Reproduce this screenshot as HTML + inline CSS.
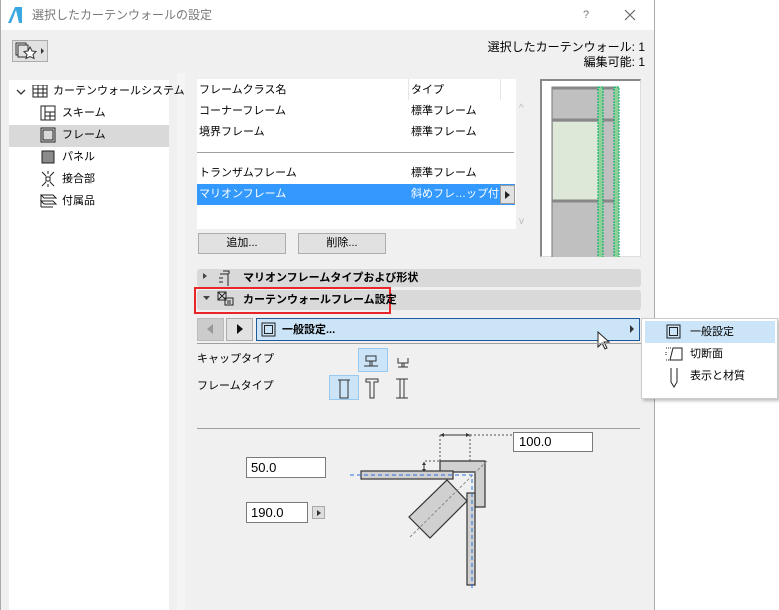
<!DOCTYPE html>
<html><head><meta charset="utf-8"><style>
*{box-sizing:border-box;margin:0;padding:0}
body{width:779px;height:610px;position:relative;background:#fff;font-family:"Liberation Sans","Noto Sans CJK JP",sans-serif;font-size:11px;color:#000;overflow:hidden}
.a{position:absolute}
.t{position:absolute;white-space:nowrap;line-height:14px}
</style></head><body>
<div class="a" style="left:0;top:0;width:655px;height:610px;background:#f0f0f0;border-left:1px solid #aaa;border-right:1px solid #aaa"></div>
<div class="a" style="left:1px;top:0;width:653px;height:30px;background:#fff"></div>
<svg class="a" style="left:7px;top:6px" width="16" height="18"><path d="M1 17 L8 1 L15 1 L15 17 Z" fill="#3aa8e0"/><path d="M4 17 L9 4 L12 17" fill="#fff"/></svg>
<div class="t" style="left:32px;top:8px;color:#777;font-size:12px">選択したカーテンウォールの設定</div>
<div class="t" style="left:583px;top:8px;color:#777">?</div>
<svg class="a" style="left:624px;top:9px" width="12" height="12"><path d="M1 1L11 11M11 1L1 11" stroke="#666" stroke-width="1.2"/></svg>
<div class="a" style="left:12px;top:40px;width:36px;height:22px;border:1px solid #adadad;background:#e1e1e1"></div>
<svg class="a" style="left:14px;top:42px" width="34" height="18"><rect x="2" y="1" width="10" height="12" fill="none" stroke="#333"/><rect x="4" y="3" width="10" height="12" fill="#e1e1e1" stroke="#333"/><path d="M16 5l2 4 4 .5-3 3 1 4-4-2-4 2 1-4-3-3 4-.5z" fill="#fff" stroke="#333"/><path d="M27 6l3 3-3 3z" fill="#333"/></svg>
<div class="t" style="right:134px;top:40px;text-align:right;font-size:12px">選択したカーテンウォール: 1</div>
<div class="t" style="right:134px;top:55px;text-align:right;font-size:12px">編集可能: 1</div>
<div class="a" style="left:9px;top:80px;width:160px;height:530px;background:#fff"></div>
<div class="a" style="left:169px;top:73px;width:16px;height:537px;background:#f0f0f0"></div>
<div class="a" style="left:177px;top:73px;width:8px;height:537px;background:#f5f5f5"></div>
<div class="a" style="left:9px;top:125px;width:160px;height:22px;background:#d9d9d9"></div>
<svg class="a" style="left:14px;top:85px" width="160" height="130">
<path d="M3 5l4 4 4-4" fill="none" stroke="#333" stroke-width="1.3"/>
<g fill="none" stroke="#222"><rect x="19" y="0" width="14" height="12"/><path d="M24 0v12M29 0v12M19 4h14M19 8h14"/>
<rect x="27" y="21" width="14" height="14"/><path d="M31 21v14M31 27h10M36 27v8M31 31h10"/>
<rect x="27" y="43" width="14" height="14"/><rect x="29" y="45" width="10" height="10"/>
<path d="M28 101l4-4M40 101l-4-4M28 87l4 4M40 87l-4 4M34 86v3M34 99v3"/><rect x="32" y="92" width="4" height="4"/>
<path d="M27 110h12l3 3H30zM27 116h12l3 3H30zM27 122h12M27 110v12"/></g>
<rect x="28" y="66" width="12" height="12" fill="#8a8a8a" stroke="#222"/></svg>
<div class="t" style="left:53px;top:84px">カーテンウォールシステム</div>
<div class="t" style="left:62px;top:106px">スキーム</div>
<div class="t" style="left:62px;top:128px">フレーム</div>
<div class="t" style="left:62px;top:150px">パネル</div>
<div class="t" style="left:62px;top:172px">接合部</div>
<div class="t" style="left:62px;top:194px">付属品</div>
<div class="a" style="left:197px;top:79px;width:319px;height:150px;background:#fff"></div>
<div class="a" style="left:408px;top:79px;width:1px;height:21px;background:#e5e5e5"></div>
<div class="a" style="left:500px;top:79px;width:1px;height:21px;background:#e5e5e5"></div>
<div class="t" style="left:199px;top:83px">フレームクラス名</div><div class="t" style="left:411px;top:83px">タイプ</div>
<div class="t" style="left:199px;top:104px">コーナーフレーム</div><div class="t" style="left:411px;top:104px">標準フレーム</div>
<div class="t" style="left:199px;top:125px">境界フレーム</div><div class="t" style="left:411px;top:125px">標準フレーム</div>
<div class="a" style="left:197px;top:152px;width:317px;height:1px;background:#a0a0a0"></div>
<div class="t" style="left:199px;top:166px">トランザムフレーム</div><div class="t" style="left:411px;top:166px">標準フレーム</div>
<div class="a" style="left:197px;top:184px;width:318px;height:21px;background:#3399ff"></div>
<div class="t" style="left:199px;top:187px;color:#fff">マリオンフレーム</div><div class="t" style="left:411px;top:187px;color:#fff">斜めフレ…ップ付き</div>
<div class="a" style="left:500px;top:185px;width:15px;height:19px;background:#e1e1e1;border:1px solid #999"></div>
<svg class="a" style="left:504px;top:190px" width="8" height="10"><path d="M1 1l5 4-5 4z" fill="#222"/></svg>
<div class="t" style="left:519px;top:102px;color:#bbb;font-size:10px">^</div>
<div class="t" style="left:519px;top:215px;color:#bbb;font-size:10px">v</div>
<div class="a" style="left:540px;top:79px;width:101px;height:178px;background:#fff;border:1px solid #ddd;border-top:2px solid #888;border-left:2px solid #888"></div>
<svg class="a" style="left:540px;top:79px" width="101" height="178">
<rect x="12" y="8" width="66" height="243" fill="#c0c0c0" stroke="#777"/>
<rect x="13" y="43" width="45" height="79" fill="#dde8d8"/>
<path d="M12 41h66M12 122h66M12 9h66M12 203h66" stroke="#888" stroke-width="3"/>
<rect x="58" y="8" width="5" height="243" fill="#8fcf9a" stroke="#0a6" stroke-dasharray="2 1"/>
<rect x="74" y="8" width="5" height="243" fill="#8fcf9a" stroke="#0a6" stroke-dasharray="2 1"/>
</svg>
<div class="a" style="left:198px;top:233px;width:88px;height:21px;background:#e1e1e1;border:1px solid #adadad;text-align:center;line-height:19px">追加...</div>
<div class="a" style="left:298px;top:233px;width:88px;height:21px;background:#e1e1e1;border:1px solid #adadad;text-align:center;line-height:19px">削除...</div>
<div class="a" style="left:197px;top:269px;width:444px;height:18px;background:#d9d9d9;border-radius:3px"></div>
<div class="a" style="left:197px;top:290px;width:444px;height:20px;background:#d9d9d9;border-radius:3px"></div>
<div class="a" style="left:194px;top:287px;width:197px;height:27px;border:2px solid #e8262a"></div>
<svg class="a" style="left:200px;top:270px" width="40" height="40"><path d="M3 3l4 3-4 3z" fill="#444"/><path d="M3 26h7l-3.5 4z" fill="#444"/>
<g fill="none" stroke="#222"><path d="M20 4h8v12M23 1h6v3M19 8h4M19 12h4"/><rect x="18" y="22" width="8" height="8"/><path d="M18 22l8 8M26 22l-8 8"/><rect x="25" y="28" width="8" height="7"/><path d="M27 31h4M27 33h4"/></g></svg>
<div class="t" style="left:243px;top:271px;font-weight:bold">マリオンフレームタイプおよび形状</div>
<div class="t" style="left:243px;top:293px;font-weight:bold">カーテンウォールフレーム設定</div>
<div class="a" style="left:197px;top:318px;width:27px;height:23px;background:#ccc;border:1px solid #bbb"></div>
<svg class="a" style="left:206px;top:323px" width="8" height="12"><path d="M7 1L1 6l6 5z" fill="#999"/></svg>
<div class="a" style="left:226px;top:318px;width:27px;height:23px;background:#e1e1e1;border:1px solid #adadad"></div>
<svg class="a" style="left:236px;top:323px" width="8" height="12"><path d="M1 1l6 5-6 5z" fill="#111"/></svg>
<div class="a" style="left:256px;top:318px;width:384px;height:23px;background:#cce4f7;border:1px solid #1e5a9a"></div>
<svg class="a" style="left:261px;top:322px" width="16" height="16"><rect x="1" y="1" width="13" height="13" fill="none" stroke="#222"/><rect x="3.5" y="3.5" width="8" height="8" fill="none" stroke="#222"/></svg>
<div class="t" style="left:282px;top:323px;font-weight:bold">一般設定...</div>
<svg class="a" style="left:629px;top:325px" width="6" height="8"><path d="M1 0l4 4-4 4z" fill="#333"/></svg>
<svg class="a" style="left:597px;top:331px" width="16" height="22"><path d="M1 1v15l4-4 3 6 2-1-3-6h5z" fill="#fff" stroke="#222"/></svg>
<div class="a" style="left:197px;top:343px;width:444px;height:1px;background:#a0a0a0"></div>
<div class="a" style="left:641px;top:318px;width:137px;height:81px;background:#fff;border:1px solid #ccc;box-shadow:2px 2px 3px rgba(0,0,0,.25)"></div>
<div class="a" style="left:645px;top:321px;width:130px;height:22px;background:#cce4f7"></div>
<svg class="a" style="left:664px;top:322px" width="20" height="66"><g fill="none" stroke="#222"><rect x="3" y="3" width="13" height="13"/><rect x="5.5" y="5.5" width="8" height="8"/><path d="M2 26h5M2 30v4M2 38h5" stroke-dasharray="1 1"/><path d="M9 26h9v12H6z"/><path d="M7 46v14l3 5 3-5V46"/></g></svg>
<div class="t" style="left:690px;top:325px">一般設定</div>
<div class="t" style="left:690px;top:347px">切断面</div>
<div class="t" style="left:690px;top:369px">表示と材質</div>
<div class="t" style="left:197px;top:352px">キャップタイプ</div>
<div class="t" style="left:197px;top:379px">フレームタイプ</div>
<div class="a" style="left:358px;top:348px;width:30px;height:24px;background:#cce4f7;border:1px solid #99c9ef"></div>
<div class="a" style="left:329px;top:375px;width:30px;height:25px;background:#cce4f7;border:1px solid #99c9ef"></div>
<svg class="a" style="left:329px;top:350px" width="100" height="52" fill="none" stroke="#333">
<path d="M37 6h10v5H37zM41 11v5h2v-5M35 16h14"/><path d="M69 8v5h10V8M73 13v4h2v-4M69 17h10"/>
<path d="M11 30h8v18h-8zM9 30h12"/><path d="M37 29h12v3h-4v16h-4V32h-4z"/><path d="M67 29h12M67 48h12M71 29v19M75 29v19"/></svg>
<div class="a" style="left:197px;top:428px;width:443px;height:1px;background:#a0a0a0"></div>
<div class="a" style="left:513px;top:432px;width:80px;height:20px;background:#fff;border:1px solid #7a7a7a;padding-left:5px;line-height:18px;font-size:13px">100.0</div>
<div class="a" style="left:246px;top:457px;width:80px;height:21px;background:#fff;border:1px solid #7a7a7a;padding-left:4px;line-height:19px;font-size:13px">50.0</div>
<div class="a" style="left:246px;top:502px;width:62px;height:21px;background:#fff;border:1px solid #7a7a7a;padding-left:4px;line-height:19px;font-size:13px">190.0</div>
<div class="a" style="left:312px;top:506px;width:13px;height:13px;background:#ddd;border:1px solid #aaa"></div>
<svg class="a" style="left:315px;top:509px" width="8" height="8"><path d="M2 1l4 3-4 3z" fill="#333"/></svg>
<svg class="a" style="left:330px;top:420px" width="200" height="180">
<path d="M110 15h30" stroke="#333"/><path d="M110 15l4-2v4zM140 15l-4-2v4z" fill="#333"/>
<path d="M110 15v26M140 15v26M140 15h43M95 41h15" stroke="#555" stroke-dasharray="2 2"/>
<path d="M94 42v10" stroke="#333"/><path d="M94 42l-2 3h4zM94 52l-2-3h4z" fill="#333"/>
<path d="M110 41h45v46h-10V52h-35z" fill="#d0d0d0" stroke="#333" stroke-width="1.2"/>
<rect x="31" y="51" width="92" height="8" fill="#d0d0d0" stroke="#333" stroke-width="1.2"/>
<rect x="137" y="73" width="8" height="92" fill="#d0d0d0" stroke="#333" stroke-width="1.2"/>
<path d="M117 60l20 21-37 37-21-21z" fill="#d0d0d0" stroke="#333" stroke-width="1.2"/>
<path d="M80 117l77-76" stroke="#888" stroke-dasharray="3 2"/>
<path d="M20 55h122v115" fill="none" stroke="#2a6ee0" stroke-dasharray="4 3"/>
</svg>
</body></html>
